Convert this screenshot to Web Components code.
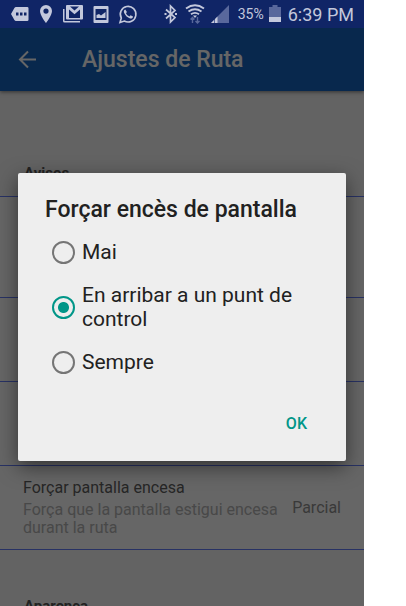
<!DOCTYPE html>
<html lang="ca">
<head>
<meta charset="utf-8">
<meta name="viewport" content="width=device-width, initial-scale=1">
<title>Ajustes de Ruta</title>
<style>
    body {
        margin: 0;
        background: #fff;
        font-family: Roboto, "Liberation Sans", sans-serif;
        color: #212121;
    }
</style>
</head>
<body>
<phone-screen>
    <status-bar slot="status" battery="35%" time="6:39 PM"></status-bar>
    <app-bar>Ajustes de Ruta</app-bar>
    <settings-section class="first" heading="Avisos">
        <setting-row class="tall"></setting-row>
        <setting-row></setting-row>
        <setting-row></setting-row>
        <setting-row>
            <span slot="label">Forçar pantalla encesa</span>
            <span slot="text">Força que la pantalla estigui encesa durant la ruta</span>
            <span slot="value">Parcial</span>
        </setting-row>
    </settings-section>
    <settings-section heading="Aparença"></settings-section>
    <choice-dialog slot="dialog" heading="Forçar encès de pantalla">
        <radio-option>Mai</radio-option>
        <radio-option checked>En arribar a un punt de control</radio-option>
        <radio-option>Sempre</radio-option>
    </choice-dialog>
</phone-screen>

<script>
// shared helper: attach a shadow root and fill it from a template
function build(host, html) {
    const template = document.createElement("template");
    template.innerHTML = html;
    host.attachShadow({ mode: "open" }).appendChild(template.content.cloneNode(true));
}

// SCREEN - status bar on top, page under a scrim, dialog over both
class PhoneScreen extends HTMLElement {
    constructor() {
        super();
        build(this, `
<style>
    :host {
        display: flex;
        flex-direction: column;
        height: 100vh;
        margin-right: 42px;
        overflow: hidden;
    }
    .stage {
        position: relative;
        flex: 1;
        min-height: 0;
        overflow: hidden;
        background: #fafafa;
    }
    .scrim {
        position: absolute;
        inset: 0;
        display: grid;
        align-items: center;
        padding: 0 18px;
        background: rgba(0, 0, 0, .6);
    }
</style>
<slot name="status"></slot>
<div class="stage">
    <slot></slot>
    <div class="scrim"><slot name="dialog"></slot></div>
</div>
`);
    }
}

// STATUS BAR
class StatusBar extends HTMLElement {
    constructor() {
        super();
        build(this, `
<style>
    :host {
        display: flex;
        align-items: center;
        justify-content: space-between;
        height: 28px;
        padding: 0 10px;
        background: #102566;
        color: #c3c8dc;
    }
    .group {
        display: flex;
        align-items: center;
    }
    .left { gap: 8px; }
    .right { gap: 4px; }
    svg {
        display: block;
        height: 20px;
        fill: currentColor;
    }
    .battery {
        margin-left: 4px;
        font-size: 14px;
    }
    .time {
        margin-left: 2px;
        font-size: 18px;
    }
</style>
<div class="group left">
    <svg width="20" viewBox="0 0 20 20" aria-hidden="true">
        <path fill-rule="evenodd" d="M6 3h11.200q1.300 0 1.300 1.300v11.400q0 1.300-1.300 1.300H6Q5 17 4.400 16L1 10l3.400-6Q5 3 6 3zM6 8.600v2.800h2.500v-2.800zm4 0v2.800h2.500v-2.800zm4 0v2.800h2.500v-2.800z"/>
    </svg>
    <svg width="16" viewBox="0 0 16 20" aria-hidden="true">
        <path fill-rule="evenodd" d="M8 1a6 6 0 0 0-6 6c0 4.500 6 12 6 12s6-7.500 6-12a6 6 0 0 0-6-6zm0 3.500a2.600 2.600 0 1 1 0 5.200 2.600 2.600 0 0 1 0-5.200z"/>
    </svg>
    <svg width="22" viewBox="0 0 22 20" aria-hidden="true">
        <path d="M1 5h1.500v12H18v1.500H2.500Q1 18.500 1 17z"/>
        <path fill-rule="evenodd" d="M5 1h15q1 0 1 1v12.500q0 1-1 1H5q-1 0-1-1V2q0-1 1-1zM7 5.500v8.500h11V5.500l-5.500 4.800zM8 2.500l4.500 4 4.500-4z"/>
    </svg>
    <svg width="18" viewBox="0 0 18 20" aria-hidden="true">
        <path fill-rule="evenodd" d="M2.500 2h13q1 0 1 1v15q0 1-1 1h-13q-1 0-1-1V3q0-1 1-1zM3.500 5v11h11V5zM4.500 14v-3l2.500-1 2 1.500L13.500 8v6z"/>
    </svg>
    <svg width="20" viewBox="0 0 20 20" aria-hidden="true">
        <path d="M2 18.500l1.300-4.500a7.800 7.800 0 1 1 3 3z" fill="none" stroke="currentColor" stroke-width="1.600"/>
        <path d="M7.300 5.500c-1.500.4-1.800 2.200-1.100 3.600 1.200 2.700 3.200 4.600 5.900 5.400 1.500.4 2.800-.4 2.900-2l-2.400-1.300-1.200 1.300c-1.600-.7-2.700-1.700-3.400-3.200l.9-1.200z"/>
    </svg>
</div>
<div class="group right">
    <svg width="18" viewBox="0 0 18 20" aria-hidden="true">
        <path d="M4 5.500l9 8-4.500 4.500V2L13 6.500l-9 8" fill="none" stroke="currentColor" stroke-width="1.700"/>
        <path d="M2.500 9h2v2h-2zM13 9h2v2h-2z"/>
    </svg>
    <svg width="22" viewBox="0 0 22 20" aria-hidden="true">
        <path d="M2 4.500q9-6.500 18 0M4.500 7.500q6.500-4.500 13 0M7 10.200q4-2.700 8 0" fill="none" stroke="currentColor" stroke-width="1.900"/>
        <path d="M9 11.500h4L11 14z"/>
        <path d="M8.500 19v-5M6.500 15.500l2-2 2 2M13.500 13v5M11.500 17l2 2 2-2" fill="none" stroke="#59689c" stroke-width="1.400"/>
    </svg>
    <svg width="20" viewBox="0 0 20 20" aria-hidden="true">
        <path d="M19 1v18H1z" fill="#59689c"/>
        <path d="M1 19l3-3v3zM5 15l2.500-2.500V19H5z"/>
    </svg>
    <span class="battery"></span>
    <svg width="14" viewBox="0 0 14 20" aria-hidden="true">
        <path d="M4.500 1h5v2H13v10H1V3h3.500z" fill="#59689c"/>
        <path d="M1 13h12v5H1z"/>
    </svg>
    <span class="time"></span>
</div>
`);
    }

    connectedCallback() {
        this.shadowRoot.querySelector(".battery").textContent = this.getAttribute("battery");
        this.shadowRoot.querySelector(".time").textContent = this.getAttribute("time");
    }
}

// APP BAR - back button and page title
class AppBar extends HTMLElement {
    constructor() {
        super();
        build(this, `
<style>
    :host {
        position: relative;
        display: flex;
        align-items: center;
        gap: 42px;
        height: 63px;
        padding: 0 10px;
        background: #1565c0;
        color: #fff;
        box-shadow: 0 1px 4px rgba(0, 0, 0, .5);
    }
    button {
        padding: 0 0 0 6px;
        border: 0;
        background: none;
        color: inherit;
    }
    svg { display: block; }
    h1 {
        margin: 0;
        font-size: 23px;
        font-weight: 500;
        line-height: 28px;
    }
</style>
<button type="button" aria-label="Enrere">
    <svg width="24" height="24" viewBox="0 0 24 24" fill="none" stroke="currentColor" stroke-width="2" aria-hidden="true">
        <path d="M20 11.500H4.500M12 3.500l-8 8 8 8"/>
    </svg>
</button>
<h1><slot></slot></h1>
`);
    }
}

// SECTION - heading with its rows
class SettingsSection extends HTMLElement {
    constructor() {
        super();
        build(this, `
<style>
    :host { display: block; }
    h2 {
        margin: 0;
        padding: 46px 24px 13px;
        border-bottom: 1px solid #647dfa;
        background: #f7f7f7;
        color: #555;
        font-size: 15px;
        font-weight: 700;
        line-height: 20px;
    }
    :host(.first) h2 { padding-top: 72px; }
</style>
<h2></h2>
<slot></slot>
`);
    }

    connectedCallback() {
        this.shadowRoot.querySelector("h2").textContent = this.getAttribute("heading");
    }
}

// ROW - label and text on the left, current value on the right
class SettingRow extends HTMLElement {
    constructor() {
        super();
        build(this, `
<style>
    :host {
        display: flex;
        align-items: center;
        gap: 10px;
        box-sizing: border-box;
        min-height: 84px;
        padding: 0 23px;
        border-bottom: 1px solid #647dfa;
        background: #fff;
        color: #606060;
        font-size: 16px;
        line-height: 18px;
    }
    :host(.tall) { min-height: 101px; }
    .main {
        display: grid;
        flex: 1;
        gap: 4px;
    }
    .text { color: #b4b4b4; }
    .value { color: #909090; }
</style>
<div class="main">
    <div><slot name="label"></slot></div>
    <div class="text"><slot name="text"></slot></div>
</div>
<div class="value"><slot name="value"></slot></div>
`);
    }
}

// DIALOG
class ChoiceDialog extends HTMLElement {
    constructor() {
        super();
        build(this, `
<style>
    :host {
        display: block;
        padding: 23px 18px 19px 27px;
        border-radius: 2px;
        background: #eee;
        box-shadow: 0 6px 20px rgba(0, 0, 0, .5);
    }
    h2 {
        margin: 0 0 12px;
        font-size: 23px;
        font-weight: 500;
        line-height: 28px;
    }
    .options {
        display: grid;
        gap: 19px;
        padding: 4px 18px 4px 7px;
    }
    .actions {
        display: flex;
        justify-content: flex-end;
        margin-top: 28px;
    }
    button {
        padding: 8px 21px;
        border: 0;
        background: none;
        color: #009688;
        font: 500 16px/20px Roboto, "Liberation Sans", sans-serif;
    }
</style>
<div role="dialog" aria-labelledby="title">
    <h2 id="title"></h2>
    <div class="options" role="radiogroup" aria-labelledby="title"><slot></slot></div>
    <div class="actions"><button type="button">OK</button></div>
</div>
`);
    }

    connectedCallback() {
        this.shadowRoot.querySelector("h2").textContent = this.getAttribute("heading");
    }
}

// RADIO OPTION
class RadioOption extends HTMLElement {
    constructor() {
        super();
        build(this, `
<style>
    :host { display: block; }
    label {
        display: flex;
        align-items: center;
        gap: 7px;
        font-size: 21px;
        line-height: 24px;
    }
    input {
        flex: none;
        appearance: none;
        width: 23px;
        height: 23px;
        margin: 0;
        border: 2px solid #757575;
        border-radius: 50%;
    }
    input:checked {
        border-color: #009688;
        background: radial-gradient(circle, #009688 5px, transparent 6px);
    }
</style>
<label><input type="radio"><span><slot></slot></span></label>
`);
    }

    connectedCallback() {
        const input = this.shadowRoot.querySelector("input");
        input.checked = this.hasAttribute("checked");
        // every option has its own shadow root, so clear the others by hand
        input.addEventListener("change", () => {
            for (const other of this.parentElement.querySelectorAll("radio-option")) {
                other.shadowRoot.querySelector("input").checked = other === this;
            }
        });
    }
}

customElements.define("phone-screen", PhoneScreen);
customElements.define("status-bar", StatusBar);
customElements.define("app-bar", AppBar);
customElements.define("settings-section", SettingsSection);
customElements.define("setting-row", SettingRow);
customElements.define("choice-dialog", ChoiceDialog);
customElements.define("radio-option", RadioOption);
</script>
</body>
</html>
